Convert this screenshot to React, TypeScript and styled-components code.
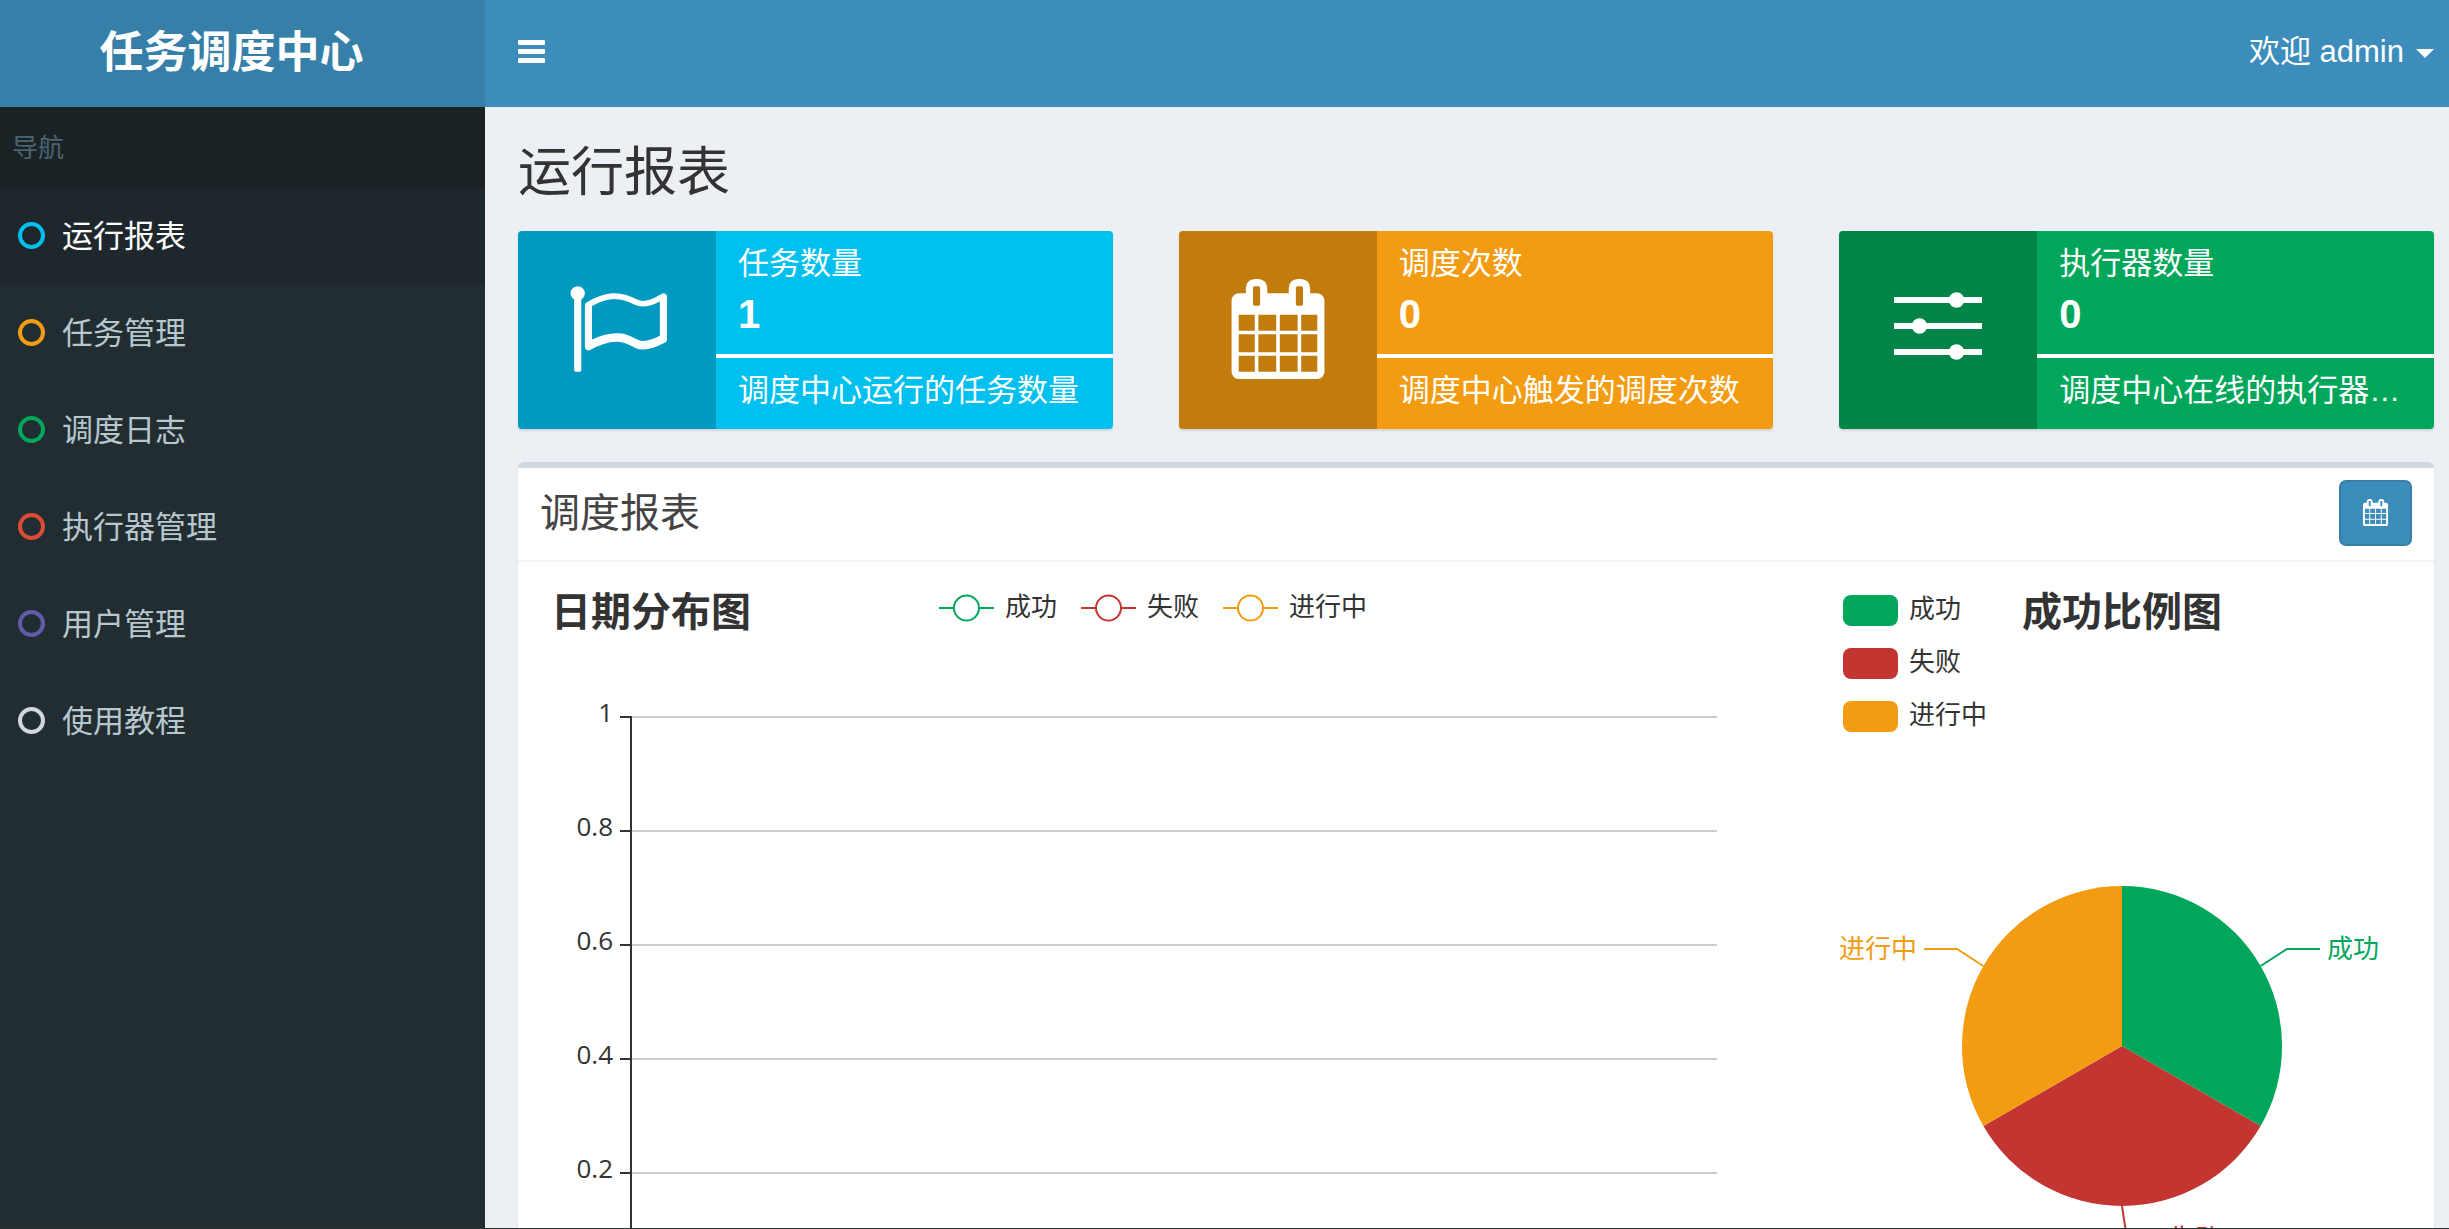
import React from "react";
import styled, { createGlobalStyle } from "styled-components";

const sans = `"Liberation Sans", Arial, "Noto Sans CJK SC", sans-serif`;
const chartSans = `"Open Sans", "Noto Sans CJK SC", sans-serif`;

const colors = {
  aqua: "#00c0ef",
  yellow: "#f39c12",
  green: "#00a65a",
  red: "#dd4b39",
  purple: "#605ca8",
  gray: "#d2d6de",
  chartRed: "#c23531",
};

const GlobalStyle = createGlobalStyle`
  *, *::before, *::after { box-sizing: border-box; }
  body {
    margin: 0;
    font-family: ${sans};
    font-size: 31px;
    line-height: 44px;
    color: #333;
    background: #ecf0f5;
  }
  h1, h2, h3, ul, p { margin: 0; padding: 0; }
  ul { list-style: none; }
  button { font: inherit; cursor: pointer; }
`;

const Shell = styled.div`
  display: grid;
  grid-template-columns: 485px 1fr;
  grid-template-rows: 107px 1fr;
  height: 100vh;
  overflow: hidden;
  border-bottom: 1px solid #2b3033;
`;

const Logo = styled.a`
  display: flex;
  align-items: center;
  justify-content: center;
  padding: 0 22px 2px 0;
  background: #367fa9;
  color: #fff;
  font-size: 44px;
  font-weight: 700;
  text-decoration: none;
`;

const TopBar = styled.header`
  display: flex;
  align-items: center;
  justify-content: space-between;
  padding: 0 15px 4px 33px;
  background: #3c8dbc;
`;

const BarButton = styled.button`
  display: flex;
  align-items: center;
  gap: 12px;
  padding: 0;
  border: 0;
  background: none;
  color: #fff;
`;

const Caret = styled.span`
  border: 9px solid transparent;
  border-top-color: #fff;
  border-bottom: 0;
  margin-top: 4px;
`;

const Sidebar = styled.nav`
  background: #222d32;
`;

const SidebarHeading = styled.div`
  padding: 19px 12px;
  background: #1a2226;
  color: #4b646f;
  font-size: 26px;
`;

const Menu = styled.ul`
  display: grid;
  gap: 1px;
`;

const MenuLink = styled.a<{ $active?: boolean }>`
  display: flex;
  align-items: center;
  gap: 17px;
  height: 96px;
  padding: 0 12px 0 18px;
  background: ${(p) => (p.$active ? "#1e282c" : "transparent")};
  color: ${(p) => (p.$active ? "#fff" : "#b8c7ce")};
  text-decoration: none;
`;

const Ring = styled.span<{ $color: string }>`
  width: 27px;
  height: 27px;
  margin-bottom: 3px;
  border: 4px solid ${(p) => p.$color};
  border-radius: 50%;
`;

const Content = styled.main`
  min-width: 0;
  padding: 33px 15px 33px 33px;
  overflow-y: auto;
  scrollbar-width: none;
`;

const PageTitle = styled.h1`
  padding-bottom: 25px;
  font-size: 53px;
  font-weight: 400;
  line-height: 66px;
`;

const InfoRow = styled.div`
  display: grid;
  grid-template-columns: repeat(3, minmax(0, 1fr));
  gap: 66px;
  margin-bottom: 33px;
`;

const InfoBox = styled.section<{ $color: string }>`
  display: flex;
  height: 198px;
  border-radius: 4px;
  overflow: hidden;
  background: ${(p) => p.$color};
  color: #fff;
  box-shadow: 0 2px 2px rgba(0, 0, 0, 0.1);
`;

const InfoIcon = styled.div`
  display: flex;
  flex: 0 0 198px;
  align-items: center;
  justify-content: center;
  padding-bottom: 2px;
  background: rgba(0, 0, 0, 0.2);
`;

const InfoBody = styled.div`
  flex: 1;
  min-width: 0;
  padding: 11px 0;
`;

const InfoText = styled.p`
  padding: 0 22px;
  overflow: hidden;
  white-space: nowrap;
  text-overflow: ellipsis;
`;

const InfoNumber = styled.p`
  padding: 0 22px;
  font-size: 40px;
  font-weight: 700;
  line-height: 57px;
`;

const InfoRule = styled.div`
  height: 4px;
  margin: 11px 0;
  background: #fff;
`;

const Box = styled.section`
  border-top: 6px solid ${colors.gray};
  border-radius: 6px;
  background: #fff;
  box-shadow: 0 2px 2px rgba(0, 0, 0, 0.1);
`;

const BoxHeader = styled.div`
  display: flex;
  align-items: flex-start;
  justify-content: space-between;
  height: 94px;
  padding: 12px 22px;
  border-bottom: 2px solid #f4f4f4;
`;

const BoxTitle = styled.h2`
  font-size: 40px;
  font-weight: 400;
  line-height: 66px;
  color: #444;
`;

const DateButton = styled.button`
  display: flex;
  align-items: center;
  justify-content: center;
  width: 73px;
  height: 66px;
  padding: 0 0 2px;
  border: 2px solid #367fa9;
  border-radius: 7px;
  background: #3c8dbc;
  color: #fff;
`;

const Charts = styled.div`
  display: grid;
  grid-template-columns: repeat(12, minmax(0, 1fr));
  gap: 66px;
  padding: 22px;
`;

const ChartPanel = styled.div<{ $span: number }>`
  grid-column: span ${(p) => p.$span};
  min-width: 0;
  font-family: ${chartSans};
`;

const ChartHead = styled.div`
  display: grid;
  grid-template-columns: 1fr auto 1fr;
  align-items: start;
  padding: 11px 11px 0;
`;

const ChartTitle = styled.h3`
  font-size: 40px;
  font-weight: 700;
  line-height: 32px;
`;

const Legend = styled.ul<{ $vertical?: boolean }>`
  display: flex;
  flex-direction: ${(p) => (p.$vertical ? "column" : "row")};
  gap: 22px 24px;
`;

const LegendItem = styled.li<{ $height: number }>`
  display: flex;
  align-items: center;
  gap: 11px;
  height: ${(p) => p.$height}px;
  font-size: 26px;
  line-height: 26px;
`;

const LegendLabel = styled.span`
  padding-bottom: 5px;
`;

const Swatch = styled.span<{ $color: string }>`
  width: 55px;
  height: 31px;
  border-radius: 8px;
  background: ${(p) => p.$color};
`;

const Drawing = styled.svg`
  display: block;
  width: 100%;
  font-size: 26px;
`;

const CalendarIcon = ({ size }: { size: number }) => (
  <svg width={size} height={size} viewBox="0 0 1792 1792" fill="currentColor" aria-hidden="true">
    <path d="M192 1664h288v-288h-288v288zm352 0h320v-288h-320v288zm-352-352h288v-320h-288v320zm352 0h320v-320h-320v320zm-352-384h288v-288h-288v288zm736 736h320v-288h-320v288zm-384-736h320v-288h-320v288zm768 736h288v-288h-288v288zm-384-352h320v-320h-320v320zm-352-864v-288q0-13-9.5-22.5t-22.5-9.5h-64q-13 0-22.5 9.5t-9.5 22.5v288q0 13 9.5 22.5t22.5 9.5h64q13 0 22.5-9.5t9.5-22.5zm736 864h288v-320h-288v320zm-384-384h320v-288h-320v288zm384 0h288v-288h-288v288zm32-480v-288q0-13-9.5-22.5t-22.5-9.5h-64q-13 0-22.5 9.5t-9.5 22.5v288q0 13 9.5 22.5t22.5 9.5h64q13 0 22.5-9.5t9.5-22.5zm384-64v1280q0 52-38 90t-90 38h-1408q-52 0-90-38t-38-90v-1280q0-52 38-90t90-38h128v-96q0-66 47-113t113-47h64q66 0 113 47t47 113v96h384v-96q0-66 47-113t113-47h64q66 0 113 47t47 113v96h128q52 0 90 38t38 90z" />
  </svg>
);

const FlagIcon = () => (
  <svg width="100" height="100" viewBox="0 -128 1792 1792" fill="currentColor" aria-hidden="true">
    <path d="M1664 890v-616q-169 91-306 91-82 0-145-32-100-49-184-76.5t-178-27.5q-173 0-403 127v599q245-113 433-113 55 0 103.5 7.5t98 26 77 31 82.5 39.5l28 14q44 22 101 22 120 0 293-92zm-1344-762q0 35-17.5 64t-46.5 46v1266q0 14-9 23t-23 9h-64q-14 0-23-9t-9-23v-1266q-29-17-46.5-46t-17.5-64q0-53 37.5-90.5t90.5-37.5 90.5 37.5 37.5 90.5zm1472 64v763q0 39-35 57-10 5-17 9-218 116-369 116-88 0-158-35l-28-14q-64-33-99-48t-91-29-114-14q-102 0-235.5 44t-228.5 102q-15 9-33 9-16 0-32-8-32-19-32-56v-742q0-35 31-55 35-21 78.5-42.5t114-52 152.5-49.5 155-19q112 0 209 31t209 86q38 19 89 19 122 0 310-112 22-12 31-17 31-16 62 2 31 20 31 54z" />
  </svg>
);

const SlidersIcon = () => (
  <svg width="88" height="74" viewBox="0 0 88 74" fill="currentColor" aria-hidden="true">
    <path d="M0 5h88v6H0zM0 31h88v6H0zM0 57h88v6H0z" />
    <circle cx="62.5" cy="8" r="7.7" />
    <circle cx="25.5" cy="34" r="7.7" />
    <circle cx="62.5" cy="60" r="7.7" />
  </svg>
);

const BarsIcon = () => (
  <svg width="27" height="23" viewBox="0 0 27 23" fill="currentColor" aria-hidden="true">
    <rect width="27" height="5" rx="1" />
    <rect y="9" width="27" height="5" rx="1" />
    <rect y="18" width="27" height="5" rx="1" />
  </svg>
);

const menu = [
  { label: "运行报表", color: colors.aqua, active: true },
  { label: "任务管理", color: colors.yellow },
  { label: "调度日志", color: colors.green },
  { label: "执行器管理", color: colors.red },
  { label: "用户管理", color: colors.purple },
  { label: "使用教程", color: colors.gray },
];

const stats = [
  { name: "任务数量", value: 1, note: "调度中心运行的任务数量", color: colors.aqua, icon: <FlagIcon /> },
  { name: "调度次数", value: 0, note: "调度中心触发的调度次数", color: colors.yellow, icon: <CalendarIcon size={100} /> },
  { name: "执行器数量", value: 0, note: "调度中心在线的执行器数量", color: colors.green, icon: <SlidersIcon /> },
];

const series = [
  { name: "成功", color: colors.green },
  { name: "失败", color: colors.chartRed },
  { name: "进行中", color: colors.yellow },
];

const ticks = ["1", "0.8", "0.6", "0.4", "0.2", "0"];
const plotTop = 90;
const tickStep = 114;
const axisX = 91;

const LineChart = () => (
  <Drawing height={720} role="img" aria-label="日期分布图">
    {ticks.map((tick, i) => {
      const y = plotTop + i * tickStep;
      return (
        <g key={tick}>
          <line x1={axisX} x2="96%" y1={y} y2={y} stroke="#ccc" strokeWidth="2" />
          <line x1={axisX - 11} x2={axisX} y1={y} y2={y} stroke="#333" strokeWidth="2" />
          <text x={axisX - 18} y={y + 5} textAnchor="end" fill="#333">
            {tick}
          </text>
        </g>
      );
    })}
    <line x1={axisX} x2={axisX} y1={plotTop - 1} y2={plotTop + 5 * tickStep} stroke="#333" strokeWidth="2" />
  </Drawing>
);

const PieChart = () => (
  <Drawing height={615} role="img" aria-label="成功比例图">
    <svg x="50%" y="314" overflow="visible" fill="none" strokeWidth="2">
      <path d="M0 0V-160A160 160 0 0 1 138.6 80Z" fill={colors.green} />
      <path d="M0 0L138.6 80A160 160 0 0 1 -138.6 80Z" fill={colors.chartRed} />
      <path d="M0 0L-138.6 80A160 160 0 0 1 0 -160Z" fill={colors.yellow} />
      <path d="M138.6 -80L165 -97H198" stroke={colors.green} />
      <path d="M0 160L5 193H38" stroke={colors.chartRed} />
      <path d="M-138.6 -80L-165 -97H-198" stroke={colors.yellow} />
      <text x="205" y="-88" fill={colors.green}>成功</text>
      <text x="47" y="202" fill={colors.chartRed}>失败</text>
      <text x="-205" y="-88" textAnchor="end" fill={colors.yellow}>进行中</text>
    </svg>
  </Drawing>
);

const LineMarker = ({ color }: { color: string }) => (
  <svg width="55" height="28" viewBox="0 0 55 28" fill="#fff" stroke={color} strokeWidth="2" aria-hidden="true">
    <path d="M0 14h55" />
    <circle cx="27.5" cy="14" r="12.5" />
  </svg>
);

export default function App() {
  return (
    <>
      <GlobalStyle />
      <Shell>
        <Logo href="#">任务调度中心</Logo>
        <TopBar>
          <BarButton type="button" aria-label="切换导航">
            <BarsIcon />
          </BarButton>
          <BarButton type="button">
            欢迎 admin
            <Caret />
          </BarButton>
        </TopBar>
        <Sidebar>
          <SidebarHeading>导航</SidebarHeading>
          <Menu>
            {menu.map((item) => (
              <li key={item.label}>
                <MenuLink href="#" $active={item.active}>
                  <Ring $color={item.color} />
                  {item.label}
                </MenuLink>
              </li>
            ))}
          </Menu>
        </Sidebar>
        <Content>
          <PageTitle>运行报表</PageTitle>
          <InfoRow>
            {stats.map((s) => (
              <InfoBox key={s.name} $color={s.color}>
                <InfoIcon>{s.icon}</InfoIcon>
                <InfoBody>
                  <InfoText>{s.name}</InfoText>
                  <InfoNumber>{s.value}</InfoNumber>
                  <InfoRule />
                  <InfoText>{s.note}</InfoText>
                </InfoBody>
              </InfoBox>
            ))}
          </InfoRow>
          <Box>
            <BoxHeader>
              <BoxTitle>调度报表</BoxTitle>
              <DateButton type="button" aria-label="选择日期">
                <CalendarIcon size={27} />
              </DateButton>
            </BoxHeader>
            <Charts>
              <ChartPanel $span={8}>
                <ChartHead>
                  <ChartTitle>日期分布图</ChartTitle>
                  <Legend>
                    {series.map((s) => (
                      <LegendItem key={s.name} $height={26}>
                        <LineMarker color={s.color} />
                        <LegendLabel>{s.name}</LegendLabel>
                      </LegendItem>
                    ))}
                  </Legend>
                </ChartHead>
                <LineChart />
              </ChartPanel>
              <ChartPanel $span={4}>
                <ChartHead>
                  <Legend $vertical>
                    {series.map((s) => (
                      <LegendItem key={s.name} $height={31}>
                        <Swatch $color={s.color} />
                        <LegendLabel>{s.name}</LegendLabel>
                      </LegendItem>
                    ))}
                  </Legend>
                  <ChartTitle>成功比例图</ChartTitle>
                </ChartHead>
                <PieChart />
              </ChartPanel>
            </Charts>
          </Box>
        </Content>
      </Shell>
    </>
  );
}
